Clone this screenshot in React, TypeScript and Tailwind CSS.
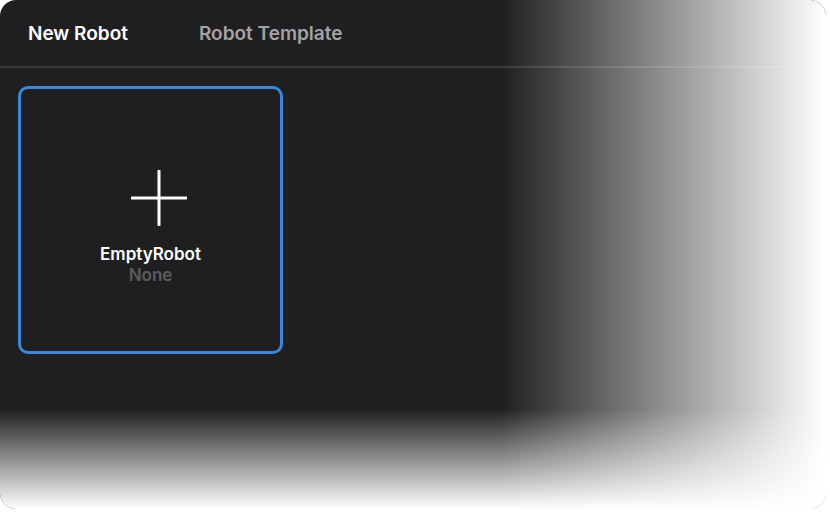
import React from 'react';

function PlusIcon() {
  return (
    <svg width="56" height="56" viewBox="0 0 56 56" fill="none" className="ml-4">
      <path d="M28 1v54M1 28h54" stroke="#ffffff" strokeWidth="3" strokeLinecap="round" />
    </svg>
  );
}

export default function App() {
  return (
    <div
      className="w-[830px] h-[513px] bg-white overflow-hidden"
      style={{ fontFamily: 'Inter, "Liberation Sans", sans-serif' }}
    >
      <div className="relative w-[826px] h-[509px] bg-[#1f1f21] rounded-[16px] overflow-hidden flex flex-col">
        <div className="h-[68px] flex items-center gap-[71px] px-[28px] pt-[2px] border-b-2 border-[#38383a] shrink-0">
          <span className="text-[19px] font-semibold text-white">New Robot</span>
          <span className="text-[19px] font-semibold text-[#a3a3a5]">Robot Template</span>
        </div>

        <div className="pt-[18px] pl-[18px]">
          <div className="w-[265px] h-[268px] rounded-[10px] border-[3px] border-[#3a87dc] flex flex-col items-center pt-[81px]">
            <PlusIcon />
            <div className="mt-[18px] text-[17px] leading-[21px] font-semibold text-white">EmptyRobot</div>
            <div className="text-[17px] leading-[21px] font-semibold text-[#5c5c5e]">None</div>
          </div>
        </div>

        <div className="pointer-events-none absolute inset-y-0 right-0 w-[326px] bg-gradient-to-r from-white/0 to-white" />
        <div className="pointer-events-none absolute inset-x-0 bottom-0 h-[100px] bg-gradient-to-b from-white/0 to-white" />
      </div>
    </div>
  );
}
